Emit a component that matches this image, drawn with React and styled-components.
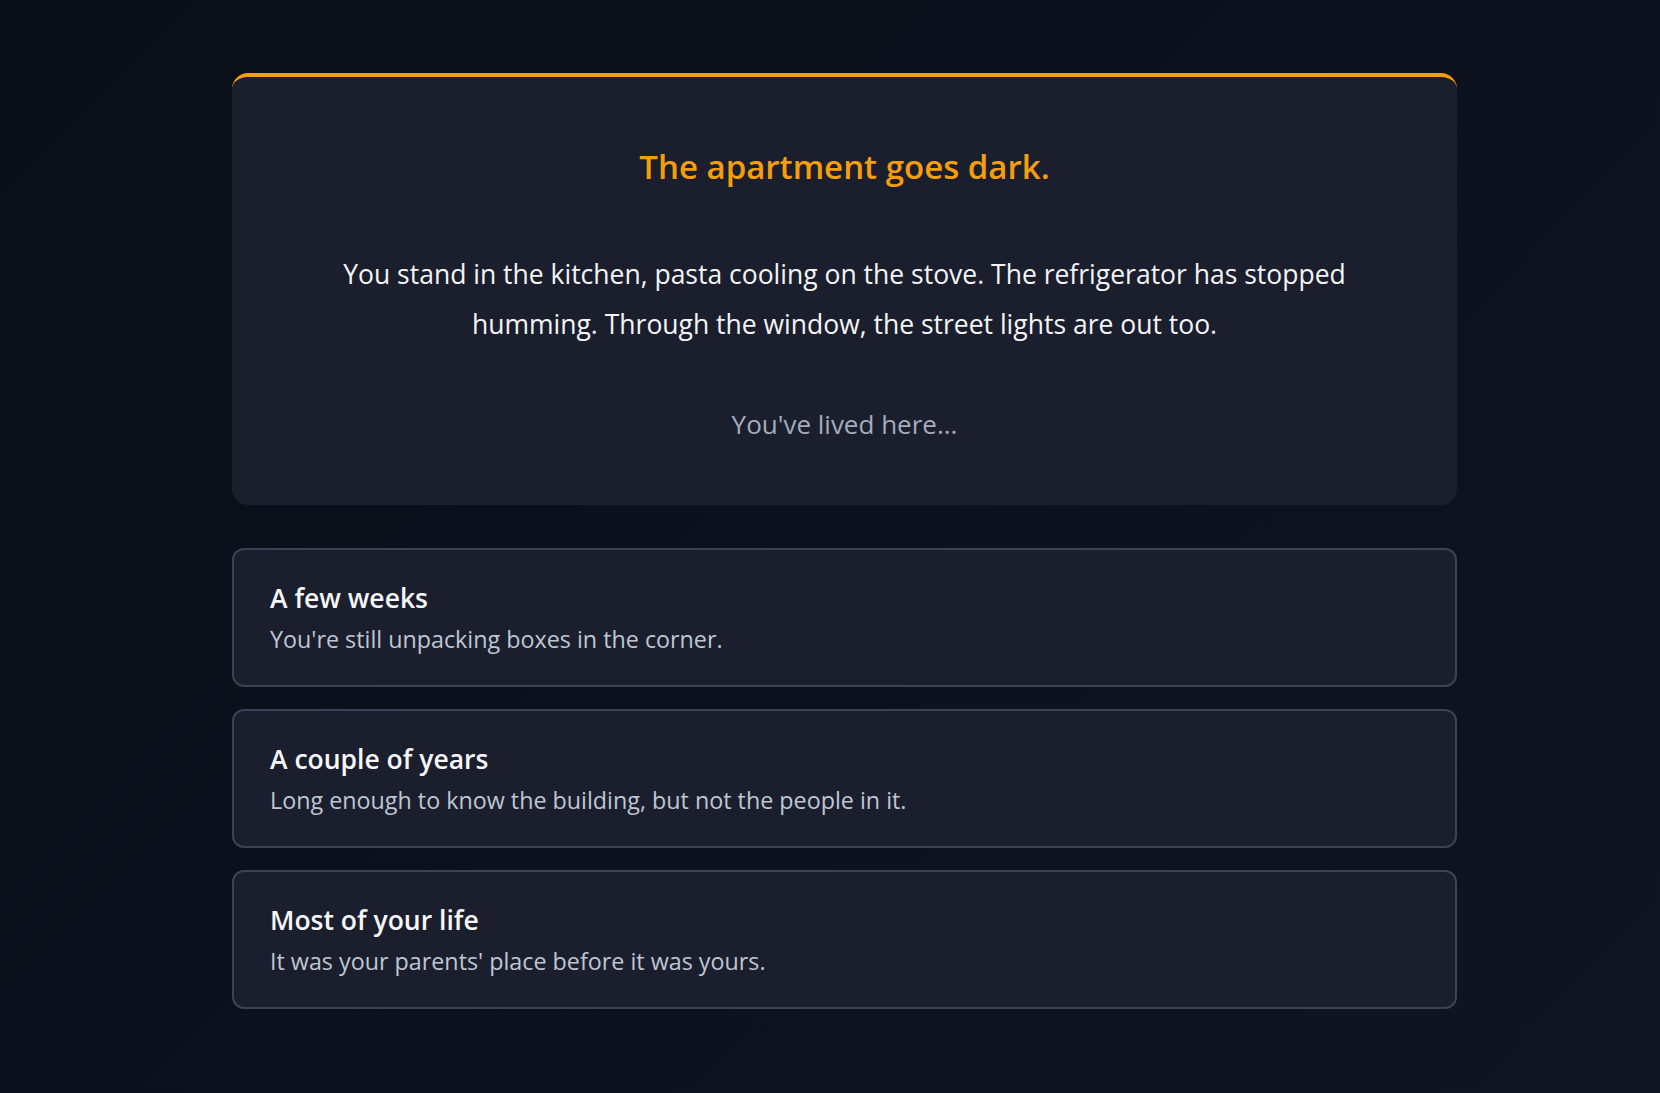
import React from 'react';
import styled, { createGlobalStyle } from 'styled-components';

const GlobalStyle = createGlobalStyle`
  html, body {
    margin: 0;
    padding: 0;
    background: #0b0f1a;
  }
  body {
    font-family: "Open Sans", "Noto Sans", sans-serif;
    -webkit-font-smoothing: antialiased;
  }
`;

const Page = styled.div`
  min-height: 100vh;
  box-sizing: border-box;
  display: flex;
  justify-content: center;
  padding: 73px 0 60px 29px;
  background: linear-gradient(135deg, #0a0e18 0%, #0c111d 50%, #0f1522 100%);
`;

const Column = styled.div`
  width: 1225px;
  display: flex;
  flex-direction: column;
`;

const StoryCard = styled.section`
  background: #1b1f2d;
  border-top: 4px solid #f59e0b;
  border-radius: 16px;
  padding: 68px 96px 56px;
  text-align: center;
`;

const Title = styled.h1`
  margin: 0 0 60px;
  font-size: 33px;
  line-height: 44px;
  font-weight: 600;
  color: #f59e0b;
`;

const Narrative = styled.p`
  margin: 0 auto 50px;
  max-width: 1040px;
  font-size: 26.5px;
  line-height: 50px;
  color: #f3f4f6;
`;

const Prompt = styled.p`
  margin: 0;
  font-size: 26px;
  line-height: 50px;
  color: #a3acbd;
`;

const Choices = styled.div`
  margin-top: 43px;
  display: flex;
  flex-direction: column;
  gap: 22px;
`;

const Choice = styled.button`
  display: block;
  width: 100%;
  text-align: left;
  font-family: inherit;
  background: #1b1f2d;
  border: 2px solid #3c4354;
  border-radius: 12px;
  padding: 31px 36px 30px;
  cursor: pointer;
`;

const ChoiceTitle = styled.div`
  font-size: 26.5px;
  line-height: 34px;
  font-weight: 600;
  color: #f5f6f8;
  margin-bottom: 8px;
`;

const ChoiceText = styled.div`
  font-size: 23.3px;
  line-height: 32px;
  color: #bfc6d3;
`;

const choices = [
  { title: 'A few weeks', text: "You're still unpacking boxes in the corner." },
  { title: 'A couple of years', text: 'Long enough to know the building, but not the people in it.' },
  { title: 'Most of your life', text: "It was your parents' place before it was yours." },
];

export default function App() {
  return (
    <>
      <GlobalStyle />
      <Page>
        <Column>
          <StoryCard>
            <Title>The apartment goes dark.</Title>
            <Narrative>
              You stand in the kitchen, pasta cooling on the stove. The refrigerator has stopped
              humming. Through the window, the street lights are out too.
            </Narrative>
            <Prompt>You've lived here...</Prompt>
          </StoryCard>
          <Choices>
            {choices.map((c) => (
              <Choice key={c.title}>
                <ChoiceTitle>{c.title}</ChoiceTitle>
                <ChoiceText>{c.text}</ChoiceText>
              </Choice>
            ))}
          </Choices>
        </Column>
      </Page>
    </>
  );
}
